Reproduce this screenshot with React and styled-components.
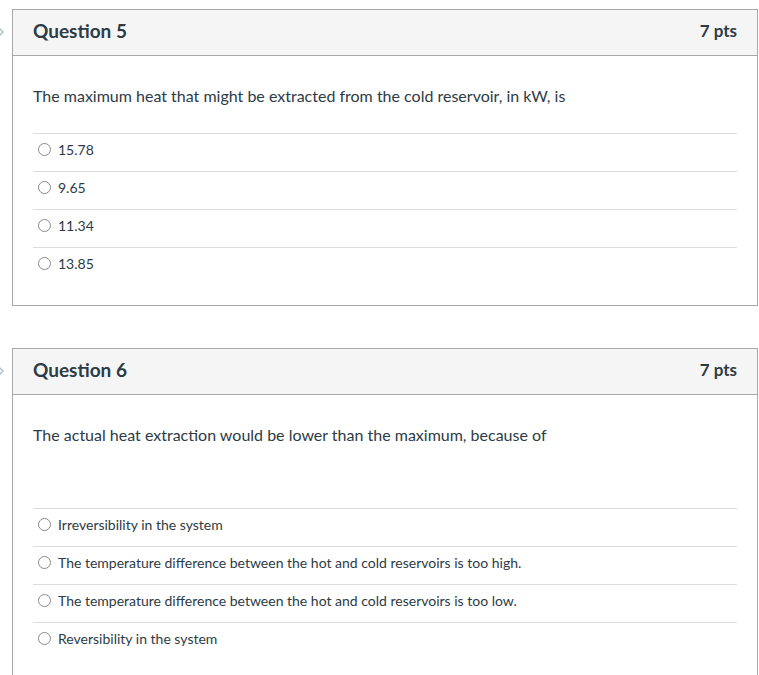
import React from 'react';
import styled, { createGlobalStyle } from 'styled-components';

const GlobalStyle = createGlobalStyle`
  html, body {
    margin: 0;
    padding: 0;
    background: #fff;
    font-family: Lato, "Noto Sans", "Liberation Sans", sans-serif;
    color: #2d3b45;
  }
`;

const Page = styled.div`
  padding: 9px 1px 0 12px;
  height: 675px;
  overflow: hidden;
  box-sizing: border-box;
`;

const Card = styled.div`
  position: relative;
  border: 1px solid #a8a8a8;
  margin-bottom: 42px;
`;

const Flag = styled.svg`
  position: absolute;
  left: -16px;
  top: 16px;
`;

const Header = styled.div`
  display: flex;
  align-items: center;
  justify-content: space-between;
  height: 46px;
  box-sizing: border-box;
  padding: 0 20px 5px;
  background: #f5f5f5;
  border-bottom: 1px solid #a8a8a8;
`;

const Title = styled.h2`
  margin: 0;
  font-size: 19px;
  font-weight: 700;
  color: #2d3b45;
`;

const Points = styled.span`
  font-size: 17px;
  font-weight: 700;
  color: #2d3b45;
`;

const Body = styled.div`
  padding: 28px 20px 20px;
`;

const Prompt = styled.p`
  margin: 0 0 ${p => 25 + (p.$extra || 0)}px;
  font-size: 16px;
  line-height: 24px;
`;

const Answers = styled.div`
  display: flex;
  flex-direction: column;
`;

const Answer = styled.label`
  display: flex;
  align-items: center;
  gap: 7px;
  height: 38px;
  box-sizing: border-box;
  padding: 0 0 6px 5px;
  border-top: 1px solid #dcdcdc;
  font-size: 14px;
  color: #2d3b45;
`;

const Radio = styled.span`
  width: 11px;
  height: 11px;
  border: 1px solid #8a8a8a;
  border-radius: 50%;
  background: #fff;
  flex: none;
`;

const questions = [
  {
    n: 5,
    pts: 7,
    prompt: 'The maximum heat that might be extracted from the cold reservoir, in kW, is',
    answers: ['15.78', '9.65', '11.34', '13.85'],
  },
  {
    n: 6,
    pts: 7,
    extra: 36,
    prompt: 'The actual heat extraction would be lower than the maximum, because of',
    answers: [
      'Irreversibility in the system',
      'The temperature difference between the hot and cold reservoirs is too high.',
      'The temperature difference between the hot and cold reservoirs is too low.',
      'Reversibility in the system',
    ],
  },
];

const App = () => (
  <Page>
    <GlobalStyle />
    {questions.map(q => (
      <Card key={q.n}>
        <Flag width="10" height="12" viewBox="0 0 10 12">
          <path d="M2 2 L6 6 L2 10" fill="none" stroke="#a9bccc" strokeWidth="1.3" />
        </Flag>
        <Header>
          <Title>Question {q.n}</Title>
          <Points>{q.pts} pts</Points>
        </Header>
        <Body>
          <Prompt $extra={q.extra}>{q.prompt}</Prompt>
          <Answers>
            {q.answers.map(a => (
              <Answer key={a}>
                <Radio />
                {a}
              </Answer>
            ))}
          </Answers>
        </Body>
      </Card>
    ))}
  </Page>
);

export default App;
